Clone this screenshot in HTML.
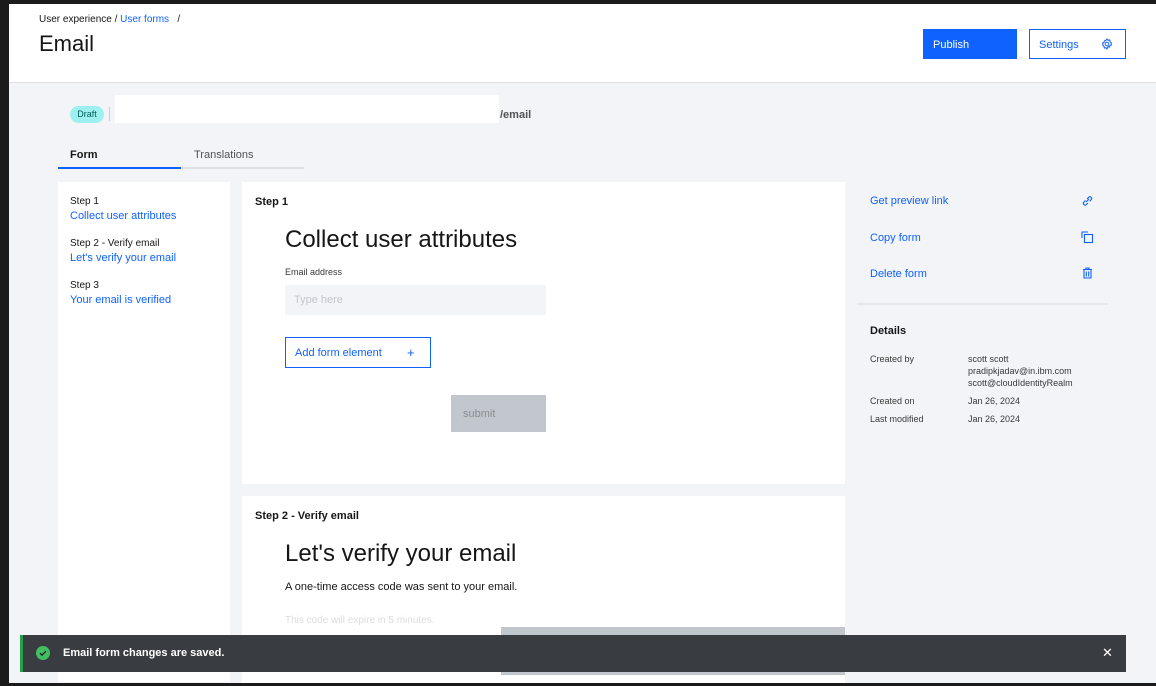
<!DOCTYPE html>
<html><head><meta charset="utf-8"><style>
*{box-sizing:border-box;margin:0;padding:0}
body{width:1156px;height:686px;overflow:hidden;background:#1b1b1b;font-family:"Liberation Sans",sans-serif;position:relative;color:#161616}
.a{position:absolute}
.blue{color:#0f62fe}
</style></head><body>
<div class="a" style="left:9px;top:4px;width:1147px;height:679px;background:#f2f4f8"></div>
<div class="a" style="left:9px;top:4px;width:1147px;height:79px;background:#fff;border-bottom:1px solid #e0e0e0"></div>
<div class="a" style="left:39px;top:14px;font-size:10px">User experience / <span class="blue">User forms</span> &nbsp; /</div>
<div class="a" style="left:39px;top:31px;font-size:22px">Email</div>
<div class="a" style="left:923px;top:29px;width:94px;height:30px;background:#0f62fe;color:#fff;font-size:11px;padding:10px 10px">Publish</div>
<div class="a" style="left:1029px;top:29px;width:97px;height:30px;border:1px solid #0f62fe;color:#0f62fe;font-size:11px;padding:9px 9px">Settings
<svg class="a" style="left:71px;top:8px" width="12" height="12" viewBox="0 0 12 12" fill="none" stroke="#0f62fe" stroke-width="1"><circle cx="6" cy="6" r="1.8"/><path d="M6 1l1 1.3 1.6-.4.4 1.6L10.4 5 10 6l.4 1-1.4.5-.4 1.6L7 8.7 6 11 5 9.7 3.4 10 3 8.5 1.6 7 2 6l-.4-1L3 4.5l.4-1.6L5 2.3z"/></svg></div>

<div class="a" style="left:70px;top:106px;width:34px;height:17px;border-radius:9px;background:#9ef0f0;color:#005d5d;font-size:9px;text-align:center;line-height:17px">Draft</div>
<div class="a" style="left:109px;top:107px;width:1px;height:14px;background:#ccc"></div>
<div class="a" style="left:115px;top:95px;width:384px;height:28px;background:#fff"></div>
<div class="a" style="left:500px;top:109px;font-size:11px;color:#525252;font-weight:bold">/email</div>

<div class="a" style="left:70px;top:149px;font-size:11px;font-weight:bold">Form</div>
<div class="a" style="left:194px;top:149px;font-size:11px;color:#525252">Translations</div>
<div class="a" style="left:58px;top:167px;width:123px;height:2px;background:#0f62fe"></div>
<div class="a" style="left:181px;top:167px;width:123px;height:2px;background:#e0e0e0"></div>

<div class="a" style="left:58px;top:182px;width:172px;height:500px;background:#fff"></div>
<div class="a" style="left:70px;top:195px;font-size:10px;line-height:14px">Step 1<br><span class="blue" style="font-size:11px">Collect user attributes</span></div>
<div class="a" style="left:70px;top:237px;font-size:10px;line-height:14px">Step 2 - Verify email<br><span class="blue" style="font-size:11px">Let's verify your email</span></div>
<div class="a" style="left:70px;top:279px;font-size:10px;line-height:14px">Step 3<br><span class="blue" style="font-size:11px">Your email is verified</span></div>

<div class="a" style="left:242px;top:182px;width:603px;height:302px;background:#fff"></div>
<div class="a" style="left:255px;top:196px;font-size:11px;font-weight:bold">Step 1</div>
<div class="a" style="left:285px;top:226px;font-size:24px">Collect user attributes</div>
<div class="a" style="left:285px;top:267px;font-size:9px;color:#393939">Email address</div>
<div class="a" style="left:285px;top:285px;width:261px;height:30px;background:#f2f4f8;color:#c1c7cd;font-size:11px;padding:9px">Type here</div>
<div class="a" style="left:285px;top:337px;width:146px;height:31px;border:1px solid #0f62fe;color:#0f62fe;font-size:11px;padding:9px 9px">Add form element<span class="a" style="left:121px;top:7px;font-size:13px">+</span></div>
<div class="a" style="left:451px;top:395px;width:95px;height:37px;background:#c1c7cd;color:#8d8d8d;font-size:11px;padding:13px 12px">submit</div>

<div class="a" style="left:242px;top:496px;width:603px;height:187px;background:#fff"></div>
<div class="a" style="left:255px;top:510px;font-size:11px;font-weight:bold">Step 2 - Verify email</div>
<div class="a" style="left:285px;top:540px;font-size:24px">Let's verify your email</div>
<div class="a" style="left:285px;top:581px;font-size:11px">A one-time access code was sent to your email.</div>
<div class="a" style="left:285px;top:615px;font-size:10px;color:#ddd">This code will expire in 5 minutes.</div>
<div class="a" style="left:501px;top:627px;width:344px;height:48px;background:#c1c7cd"></div>

<div class="a" style="left:870px;top:195px;font-size:11px" ><span class="blue">Get preview link</span></div>
<svg class="a" style="left:1081px;top:195px" width="13" height="12" viewBox="0 0 13 12" fill="none" stroke="#0f62fe" stroke-width="1.1"><path d="M5 7l3-3M4.5 5.5 2.8 7.2a1.7 1.7 0 0 0 2.4 2.4L7 8M6 4l1.8-1.8a1.7 1.7 0 0 1 2.4 2.4L8.5 6.3"/></svg>
<div class="a" style="left:870px;top:232px;font-size:11px"><span class="blue">Copy form</span></div>
<svg class="a" style="left:1081px;top:231px" width="13" height="13" viewBox="0 0 13 13" fill="none" stroke="#0f62fe" stroke-width="1.1"><path d="M1 7V1h6"/><rect x="3.5" y="3.5" width="8" height="8"/></svg>
<div class="a" style="left:870px;top:268px;font-size:11px"><span class="blue">Delete form</span></div>
<svg class="a" style="left:1082px;top:267px" width="11" height="12" viewBox="0 0 11 12" fill="none" stroke="#0f62fe" stroke-width="1.1"><path d="M1 2.5h9M4 2.5V1h3v1.5M2 2.5v8.5h7V2.5M4.3 4.5v5M6.7 4.5v5"/></svg>
<div class="a" style="left:857px;top:303px;width:251px;height:2px;background:#e4e6ea"></div>
<div class="a" style="left:870px;top:325px;font-size:11px;font-weight:bold">Details</div>
<div class="a" style="left:870px;top:353px;font-size:9px;line-height:12px;color:#393939">Created by</div>
<div class="a" style="left:968px;top:353px;font-size:9px;line-height:12px;color:#393939">scott scott<br>pradipkjadav@in.ibm.com<br>scott@cloudIdentityRealm</div>
<div class="a" style="left:870px;top:396px;font-size:9px;color:#393939">Created on</div>
<div class="a" style="left:968px;top:396px;font-size:9px;color:#393939">Jan 26, 2024</div>
<div class="a" style="left:870px;top:414px;font-size:9px;color:#393939">Last modified</div>
<div class="a" style="left:968px;top:414px;font-size:9px;color:#393939">Jan 26, 2024</div>

<div class="a" style="left:20px;top:635px;width:1106px;height:37px;background:#393c40;border-left:3px solid #24a148"></div>
<svg class="a" style="left:36px;top:646px" width="14" height="14" viewBox="0 0 14 14"><circle cx="7" cy="7" r="7" fill="#42be65"/><path d="M4 7.2l2 2 4-4" stroke="#161616" stroke-width="1.2" fill="none"/></svg>
<div class="a" style="left:63px;top:647px;font-size:11px;color:#fff;font-weight:bold">Email form changes are saved.</div>
<div class="a" style="left:1102px;top:645px;font-size:13px;color:#fff">✕</div>
</body></html>
